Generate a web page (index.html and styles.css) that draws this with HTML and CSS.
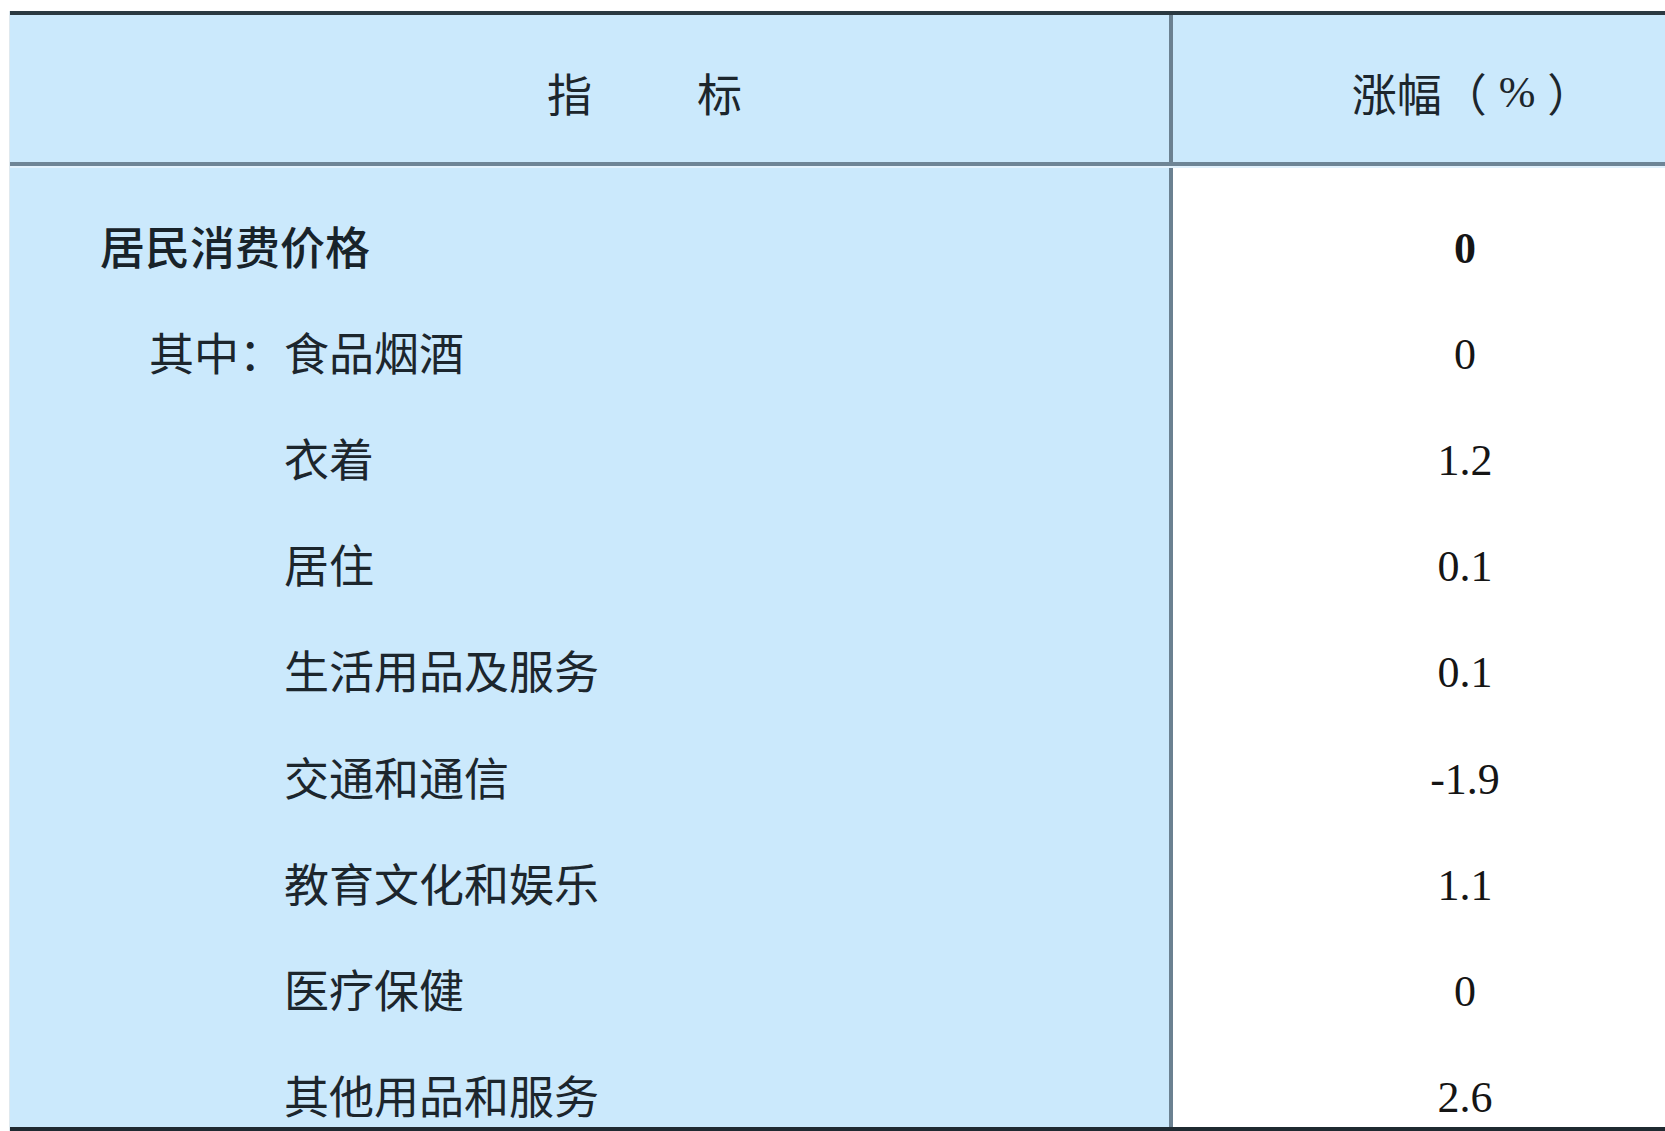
FILE: index.html
```html
<!DOCTYPE html>
<html lang="zh-CN">
<head>
<meta charset="utf-8">
<title>居民消费价格涨幅</title>
<link rel="stylesheet" href="styles.css">
</head>
<body>
<div class="table">
  <div class="head">
    <div class="head-name"><span>指</span><span>标</span></div>
    <div class="head-val">涨幅<span class="paren">（</span><span class="pct">%</span><span class="paren">）</span></div>
  </div>
  <div class="body">
    <div class="col-names">
      <div class="row row-main">居民消费价格</div>
      <div class="row row-lead">其中：食品烟酒</div>
      <div class="row row-sub">衣着</div>
      <div class="row row-sub">居住</div>
      <div class="row row-sub">生活用品及服务</div>
      <div class="row row-sub">交通和通信</div>
      <div class="row row-sub">教育文化和娱乐</div>
      <div class="row row-sub">医疗保健</div>
      <div class="row row-sub">其他用品和服务</div>
    </div>
    <div class="col-vals">
      <div class="row val val-main">0</div>
      <div class="row val">0</div>
      <div class="row val">1.2</div>
      <div class="row val">0.1</div>
      <div class="row val">0.1</div>
      <div class="row val">-1.9</div>
      <div class="row val">1.1</div>
      <div class="row val">0</div>
      <div class="row val">2.6</div>
    </div>
  </div>
</div>
</body>
</html>
```

FILE: styles.css
```css
html, body {
  margin: 0;
  padding: 0;
  background: #ffffff;
}

body {
  padding: 11px 0 0 9px;
  font-family: "Noto Sans CJK SC", "Noto Sans", sans-serif;
  color: #1c262d;
  text-spacing-trim: space-all;
}

.table {
  display: flex;
  flex-direction: column;
  border-left: 1px solid #dfe9ef;
}

.head {
  display: grid;
  grid-template-columns: 1159px 1fr;
  height: 147px;
  background: #cbe9fc;
  border-top: 4px solid #2b3941;
  border-bottom: 4px solid #6e8596;
}

.head-name {
  display: flex;
  justify-content: center;
  align-items: center;
  gap: 105px;
  padding: 8px 0 0 110px;
  font-size: 45px;
}

.head-val {
  display: flex;
  justify-content: center;
  align-items: center;
  padding: 8px 0 0 106px;
  border-left: 4px solid #6b8191;
  font-size: 45px;
}

.paren {
  display: inline-block;
  width: 45px;
  text-align: center;
}

.pct {
  font-family: "Liberation Serif", "Times New Roman", serif;
  font-size: 44px;
  padding: 0 12px;
}

.body {
  display: grid;
  grid-template-columns: 1159px 1fr;
  height: 959px;
  overflow: hidden;
  border-bottom: 5px solid #1f2a31;
  border-top: 2px solid #e2f2fd;
}

.col-names {
  background: #cbe9fc;
  padding-top: 24px;
}

.col-vals {
  background: #ffffff;
  border-left: 4px solid #6b8191;
  padding-top: 27px;
}

.row {
  height: 106.2px;
  display: flex;
  align-items: center;
  font-size: 45px;
  white-space: nowrap;
}

.row-main {
  padding-left: 90px;
  font-weight: 500;
  color: #18232a;
}

.row-lead {
  padding-left: 139px;
}

.row-sub {
  padding-left: 274px;
}

.val {
  justify-content: center;
  padding-left: 92px;
  font-family: "Liberation Serif", "Times New Roman", serif;
  font-size: 44px;
  color: #151515;
}

.val-main {
  font-weight: 700;
}
```
